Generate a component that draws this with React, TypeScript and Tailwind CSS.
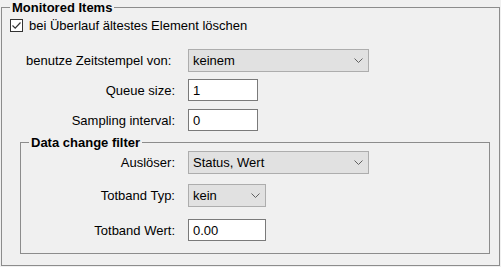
import React from 'react';

const Chevron: React.FC = () => (
  <svg width="9" height="5" viewBox="0 0 9 5" className="shrink-0">
    <path d="M0.5 0.5 L4.5 4.5 L8.5 0.5" fill="none" stroke="#606060" strokeWidth="1" />
  </svg>
);

interface SelectBoxProps {
  value: string;
  width: string;
}

const SelectBox: React.FC<SelectBoxProps> = ({ value, width }) => (
  <div
    className={`flex items-center justify-between h-[23px] ${width} bg-[#e1e1e1] border border-[#adadad] pl-[4px] pr-[5px]`}
  >
    <span>{value}</span>
    <Chevron />
  </div>
);

interface TextBoxProps {
  value: string;
  width: string;
}

const TextBox: React.FC<TextBoxProps> = ({ value, width }) => (
  <div className={`flex items-center h-[22px] ${width} bg-white border border-[#7a7a7a] pl-[4px]`}>
    <span>{value}</span>
  </div>
);

export default function App() {
  return (
    <div className="w-[501px] h-[267px] bg-[#f0f0f0] text-black text-[13px] leading-[15px] font-['Liberation_Sans',Arial,sans-serif] overflow-hidden">
      <fieldset className="ml-[1px] w-[499px] h-[266px] border border-[#8c8c8c] pb-[11px]">
        <legend className="ml-[8px] px-[2px] font-bold">Monitored Items</legend>

        {/* checkbox row */}
        <div className="flex items-center mt-[3px] pl-[8px]">
          <div className="flex items-center justify-center w-[13px] h-[13px] border border-[#333] bg-white">
            <svg width="11" height="11" viewBox="0 0 11 11">
              <path d="M1.5 5.5 L4.2 8.2 L9.5 2.5" fill="none" stroke="#333" strokeWidth="1.2" />
            </svg>
          </div>
          <span className="ml-[6px]">bei Überlauf ältestes Element löschen</span>
        </div>

        <div className="flex items-center mt-[16px]">
          <div className="w-[186px] pl-[24px]">benutze Zeitstempel von:</div>
          <SelectBox value="keinem" width="w-[181px]" />
        </div>

        <div className="flex items-center mt-[7px]">
          <div className="w-[186px] text-right pr-[13px]">Queue size:</div>
          <TextBox value="1" width="w-[70px]" />
        </div>

        <div className="flex items-center mt-[8px]">
          <div className="w-[186px] text-right pr-[13px]">Sampling interval:</div>
          <TextBox value="0" width="w-[70px]" />
        </div>

        <fieldset className="mt-[4px] ml-[18px] mr-[9px] border border-[#8c8c8c] pb-[12px]">
          <legend className="ml-[8px] px-[2px] font-bold">Data change filter</legend>

          <div className="flex items-center mt-[1px]">
            <div className="w-[167px] text-right pr-[13px]">Auslöser:</div>
            <SelectBox value="Status, Wert" width="w-[181px]" />
          </div>

          <div className="flex items-center mt-[10px]">
            <div className="w-[167px] text-right pr-[13px]">Totband Typ:</div>
            <SelectBox value="kein" width="w-[78px]" />
          </div>

          <div className="flex items-center mt-[12px]">
            <div className="w-[167px] text-right pr-[13px]">Totband Wert:</div>
            <TextBox value="0.00" width="w-[78px]" />
          </div>
        </fieldset>
      </fieldset>
    </div>
  );
}
